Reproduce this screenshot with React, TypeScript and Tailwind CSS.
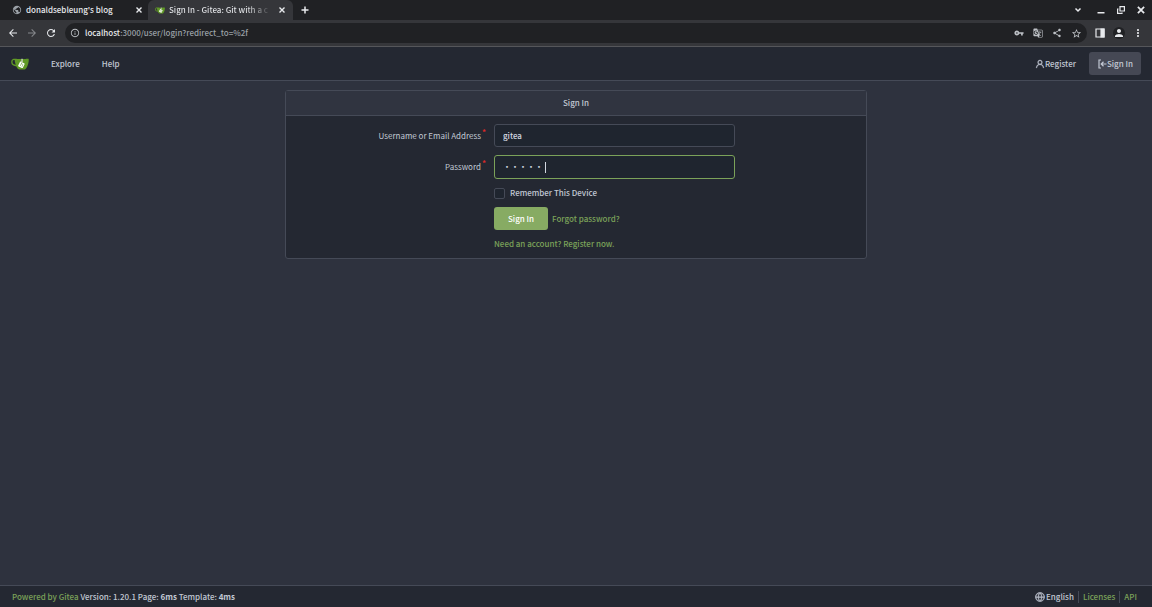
import React, { useState } from 'react';
import {
  MdArrowBack,
  MdArrowForward,
  MdRefresh,
  MdInfoOutline,
  MdVpnKey,
  MdGTranslate,
  MdShare,
  MdStarBorder,
  MdPerson,
  MdMoreVert,
  MdPublic,
} from 'react-icons/md';
import { GoPerson, GoGlobe } from 'react-icons/go';

const GiteaLogo: React.FC<{ className?: string }> = ({ className }) => (
  <svg viewBox="0 120 640 430" className={className} aria-hidden="true">
    <path
      fill="#609926"
      d="M622.7 149.8c-4.1-4.1-9.6-4-9.6-4s-117.2 6.6-177.9 8c-13.3.3-26.5.6-39.6.7v117.2c-5.5-2.6-11.1-5.3-16.6-7.9 0-36.4-.1-109.2-.1-109.2-29 .4-89.2-2.2-89.2-2.2s-141.4-7.1-156.8-8.5c-9.8-.6-22.5-2.1-39 1.5-8.7 1.8-33.5 7.4-53.8 26.9C-4.9 212.4 6.6 276.2 8 285.8c1.7 11.7 6.9 44.2 31.7 72.5 45.8 56.1 144.4 54.8 144.4 54.8s12.1 28.9 30.6 55.500c25 33.1 50.7 58.9 75.7 62 63 0 188.9-.1 188.9-.1s12 .1 28.3-10.3c14-8.500 26.500-23.400 26.500-23.400S547 483 565 451.500c5.500-9.700 10.100-19.100 14.100-28 0 0 55.200-117.100 55.200-231.100-1.100-34.500-9.600-40.600-11.600-42.600zM125.600 353.900c-25.900-8.500-36.900-18.700-36.900-18.700S69.600 321.800 60 295.400c-16.500-44.200-1.400-71.200-1.400-71.200s8.400-22.500 38.500-30c13.800-3.700 31-3.100 31-3.100s7.100 59.400 15.700 94.200c7.200 29.200 24.800 77.700 24.800 77.700s-26.100-3.100-43-9.100z"
    />
    <path
      fill="#fff"
      d="m316 266-60 119c-5 14 0 28 12 36l118 57c15 7 30 1 37-12l60-119c6-14 1-30-13-37l-60-29V150h-36v108l-21-10c-15-6-30-1-37 18z"
    />
    <path
      fill="none"
      stroke="#609926"
      strokeWidth="20"
      d="m395 270-66 134M367 322l44 21c14 8 12 20 5 34l-28 56"
    />
  </svg>
);

const SignInIcon: React.FC = () => (
  <svg viewBox="0 0 10 10" className="size-[10px]" fill="none" stroke="currentColor" strokeWidth="1.2" aria-hidden="true">
    <path d="M4 1H2v8h2M9.500 5H4M6.500 2.800 4.200 5l2.300 2.200" />
  </svg>
);

const CloseIcon: React.FC<{ className: string }> = ({ className }) => (
  <svg viewBox="0 0 8 8" className={className} fill="none" stroke="currentColor" strokeWidth="1.4" aria-hidden="true">
    <path d="m1.500 1.500 5 5M6.500 1.500l-5 5" />
  </svg>
);

const PlusIcon: React.FC = () => (
  <svg viewBox="0 0 10 10" className="size-[10px]" fill="none" stroke="currentColor" strokeWidth="1.500" aria-hidden="true">
    <path d="M5 1.500v7M1.500 5h7" />
  </svg>
);

const ChevronIcon: React.FC = () => (
  <svg viewBox="0 0 10 10" className="size-[10px]" fill="none" stroke="currentColor" strokeWidth="1.500" aria-hidden="true">
    <path d="m2.500 3.500 2.500 2.500 2.500-2.500" />
  </svg>
);

const MinimizeIcon: React.FC = () => (
  <svg viewBox="0 0 10 10" className="size-[10px]" fill="currentColor" aria-hidden="true">
    <path d="M1.500 7H8.500v1.500h-7z" />
  </svg>
);

const RestoreIcon: React.FC = () => (
  <svg viewBox="0 0 10 10" className="size-[10px]" fill="none" stroke="currentColor" strokeWidth="1.200" aria-hidden="true">
    <path d="M4 1.600h4.400V6H4zM2.500 4H1.600v4.400H6v-1" />
  </svg>
);

const SidePanelIcon: React.FC = () => (
  <svg viewBox="0 0 10 10" className="size-[10px]" fill="none" stroke="currentColor" strokeWidth="1.200" aria-hidden="true">
    <path d="M1 1h8v8H1z" />
    <path d="M6 1h3v8H6z" fill="currentColor" />
  </svg>
);

const IconButton: React.FC<{ label: string; children: React.ReactNode }> = ({ label, children }) => (
  <button type="button" aria-label={label} className="flex size-3 shrink-0 items-center justify-center">
    {children}
  </button>
);

const BrowserChrome: React.FC = () => (
  <div className="border-b border-[#55565a] bg-[#35363a] text-[#e8eaed]">
    <div className="flex h-5 items-center bg-[#202124]">
      <div className="flex h-full w-37 items-center gap-1 pr-[3px] pl-3">
        <MdPublic size={10} className="shrink-0 text-[#9aa0a6]" />
        <span className="flex-1 whitespace-nowrap">donaldsebleung's blog</span>
        <IconButton label="Close tab"><CloseIcon className="size-2" /></IconButton>
      </div>
      <div className="flex h-full w-[145px] items-center gap-1 rounded-t-md bg-[#35363a] pr-[5px] pl-[7px]">
        <GiteaLogo className="h-[7px] w-[10px] shrink-0" />
        <span className="flex-1 bg-linear-to-r from-[#e8eaed] from-75% to-transparent bg-clip-text whitespace-nowrap text-transparent">
          Sign In - Gitea: Git with a c
        </span>
        <IconButton label="Close tab"><CloseIcon className="size-2" /></IconButton>
      </div>
      <div className="ml-1.5">
        <IconButton label="New tab"><PlusIcon /></IconButton>
      </div>
      <div className="ml-auto flex items-center gap-2 pr-[5px]">
        <div className="mr-[3px] flex">
          <IconButton label="Search tabs"><ChevronIcon /></IconButton>
        </div>
        <IconButton label="Minimize"><MinimizeIcon /></IconButton>
        <IconButton label="Restore"><RestoreIcon /></IconButton>
        <IconButton label="Close"><CloseIcon className="size-[10px]" /></IconButton>
      </div>
    </div>

    <div className="flex h-[26px] items-center pr-2 pl-[7px]">
      <div className="flex items-center gap-[7px]">
        <IconButton label="Back"><MdArrowBack size={12} /></IconButton>
        <span className="flex text-[#85878b]">
          <IconButton label="Forward"><MdArrowForward size={12} /></IconButton>
        </span>
        <IconButton label="Reload"><MdRefresh size={12} /></IconButton>
      </div>
      <div className="ml-2 flex h-5 flex-1 items-center rounded-full bg-[#202124] pr-[5px] pl-[5px]">
        <MdInfoOutline size={10} className="text-[#bdc1c6]" />
        <span className="ml-[5px] text-[#9aa0a6]">
          <span className="text-[#e8eaed]">localhost</span>:3000/user/login?redirect_to=%2f
        </span>
        <div className="ml-auto flex items-center gap-[7px] text-[#bdc1c6]">
          <IconButton label="Passwords"><MdVpnKey size={10} /></IconButton>
          <IconButton label="Translate"><MdGTranslate size={10} /></IconButton>
          <IconButton label="Share"><MdShare size={10} /></IconButton>
          <IconButton label="Bookmark"><MdStarBorder size={11} /></IconButton>
        </div>
      </div>
      <div className="ml-[7px] flex items-center gap-[7px]">
        <IconButton label="Side panel"><SidePanelIcon /></IconButton>
        <span className="flex rounded-full bg-[#202124]">
          <IconButton label="Profile"><MdPerson size={12} /></IconButton>
        </span>
        <IconButton label="Menu"><MdMoreVert size={12} /></IconButton>
      </div>
    </div>
  </div>
);

const Label: React.FC<{ htmlFor: string; children: React.ReactNode }> = ({ htmlFor, children }) => (
  <label htmlFor={htmlFor} className="flex justify-end gap-px font-normal">
    {children}
    <span className="-mt-1 font-bold text-[#db2828]">*</span>
  </label>
);

const inputClass =
  'h-[23px] w-full rounded-[3px] border border-[#454a57] bg-[#1f252f] px-2 text-[#d2d7e0] outline-none focus:border-[#7ba259]';

const App: React.FC = () => {
  const [username, setUsername] = useState('gitea');
  const [password, setPassword] = useState('gitea');
  const [remember, setRemember] = useState(false);

  return (
    <div className="flex min-h-screen flex-col bg-[#2e323e] font-['Noto_Sans_CJK_SC',sans-serif] text-[8px] leading-3 font-medium text-[#c2c8d4]">
      <BrowserChrome />

      <nav className="flex h-[34px] items-center border-b border-[#454a57] bg-[#242832] pr-[11px] pl-[11px]">
        <a href="#home" aria-label="Home"><GiteaLogo className="h-3 w-[18px]" /></a>
        <a href="#explore" className="ml-[22px]">Explore</a>
        <a href="#help" className="ml-[22px]">Help</a>
        <a href="#register" className="ml-auto flex items-center">
          <GoPerson size={10} strokeWidth={1} />Register
        </a>
        <a href="#login" className="ml-[13px] flex h-[23px] items-center rounded-[3px] bg-[#454854] px-2">
          <SignInIcon />Sign In
        </a>
      </nav>

      <main className="flex-1 px-4 pt-[9px]">
        <form
          className="mx-auto max-w-[582px] rounded-[3px] border border-[#454a57] bg-[#242832]"
          onSubmit={e => e.preventDefault()}
        >
          <h1 className="border-b border-[#454a57] bg-[#303440] py-1.5 text-center">Sign In</h1>
          <div className="grid grid-cols-[200px_minmax(0,241px)] items-center gap-x-2 pt-2 pb-2">
            <Label htmlFor="user_name">Username or Email Address</Label>
            <input
              id="user_name"
              type="text"
              className={inputClass}
              value={username}
              onChange={e => setUsername(e.target.value)}
            />
            <div className="col-span-2 h-2" />
            <Label htmlFor="password">Password</Label>
            {/* focused field, the caret is drawn right after the dots */}
            <div className="flex h-6 items-center rounded-[3px] border border-[#7ba259] bg-[#1f252f] px-2">
              <input
                id="password"
                type="password"
                autoComplete="off"
                className="w-[42px] bg-transparent text-[#d2d7e0] outline-none"
                value={password}
                onChange={e => setPassword(e.target.value)}
              />
              <span className="h-[11px] w-px bg-[#d2d7e0]" />
            </div>
            <label className="col-start-2 mt-2 flex items-center gap-[5px]">
              <input
                type="checkbox"
                className="size-[11px] appearance-none rounded-[2px] border border-[#454a57] bg-[#1f252f] checked:bg-[#87ab63]"
                checked={remember}
                onChange={e => setRemember(e.target.checked)}
              />
              Remember This Device
            </label>
            <div className="col-start-2 mt-2 flex items-center gap-1">
              <button type="submit" className="h-[23px] rounded-[3px] bg-[#87ab63] px-3.5 text-white">Sign In</button>
              <a href="#forgot" className="text-[#7ba259]">Forgot password?</a>
            </div>
            <a href="#sign_up" className="col-start-2 mt-2 text-[#7ba259]">Need an account? Register now.</a>
          </div>
        </form>
      </main>

      <footer className="flex h-[22px] items-center justify-between border-t border-[#454a57] bg-[#242832] px-3">
        <div>
          <a href="#gitea" className="text-[#7ba259]">Powered by Gitea</a> Version: 1.20.1 Page:{' '}
          <strong>6ms</strong> Template: <strong>4ms</strong>
        </div>
        <div className="flex items-center">
          <button type="button" className="flex items-center gap-px pr-1">
            <GoGlobe size={10} strokeWidth={1} />English
          </button>
          <a href="#licenses" className="border-l border-[#454a57] px-1 text-[#7ba259]">Licenses</a>
          <a href="#api" className="border-l border-[#454a57] pr-[3px] pl-1 text-[#7ba259]">API</a>
        </div>
      </footer>
    </div>
  );
};

export default App;
